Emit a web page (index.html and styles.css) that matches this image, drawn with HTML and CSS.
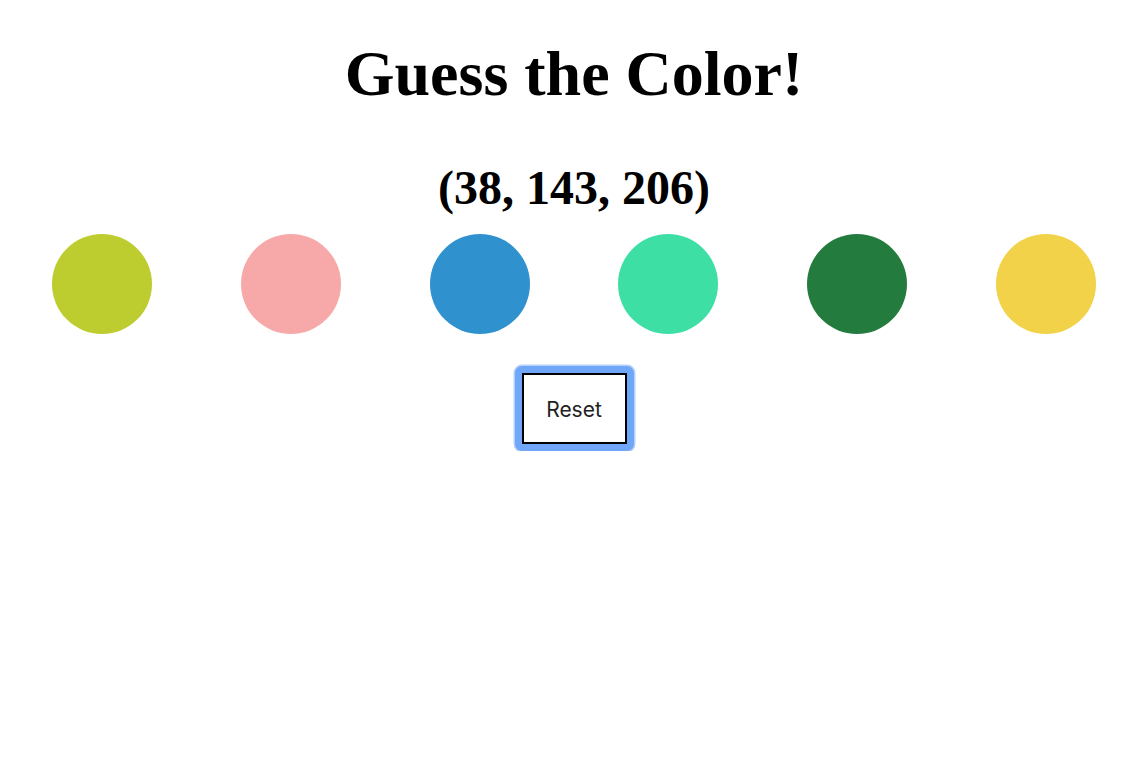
FILE: index.html
```html
<!DOCTYPE html>
<html lang="en">
<head>
<meta charset="utf-8">
<title>Guess the Color!</title>
<link rel="stylesheet" href="styles.css">
</head>
<body>
<main class="game">
  <h1 class="title">Guess the Color!</h1>
  <h2 class="target">(38, 143, 206)</h2>
  <div class="swatches">
    <div class="swatch" style="background:#bdcd30"></div>
    <div class="swatch" style="background:#f6a9a8"></div>
    <div class="swatch" style="background:#2f92ce"></div>
    <div class="swatch" style="background:#3ddfa5"></div>
    <div class="swatch" style="background:#247b3e"></div>
    <div class="swatch" style="background:#f2d249"></div>
  </div>
  <div class="controls">
    <span class="focus-ring"><button class="reset" type="button">Reset</button></span>
  </div>
</main>
</body>
</html>
```

FILE: styles.css
```css
html, body {
  margin: 0;
  padding: 0;
  background: #ffffff;
}

.game {
  width: 1132px;
  margin-left: 8px;
  font-family: "Liberation Serif", "Times New Roman", serif;
  text-align: center;
  color: #000;
}

.title {
  font-size: 64px;
  line-height: 72px;
  font-weight: bold;
  margin: 38px 0 0;
}

.target {
  font-size: 48px;
  line-height: 56px;
  font-weight: bold;
  margin: 50px 0 0;
}

.swatches {
  display: flex;
  justify-content: space-around;
  margin-top: 18px;
}

.swatch {
  width: 100px;
  height: 100px;
  border-radius: 50%;
  flex: none;
}

.controls {
  margin-top: 32px;
  display: flex;
  justify-content: center;
}

.focus-ring {
  display: inline-block;
  padding: 7px;
  border-radius: 7px;
  background: #70a7f8;
  box-shadow: 0 0 0 1.5px #b6d1fb;
  line-height: 0;
}

.reset {
  box-sizing: border-box;
  width: 105px;
  height: 71px;
  margin: 0;
  padding: 2px 0 0;
  border: 2px solid #000;
  border-radius: 0;
  background: #fff;
  color: #222;
  font-family: Inter, "Liberation Sans", sans-serif;
  font-size: 21px;
  line-height: 24px;
  cursor: pointer;
}
```
